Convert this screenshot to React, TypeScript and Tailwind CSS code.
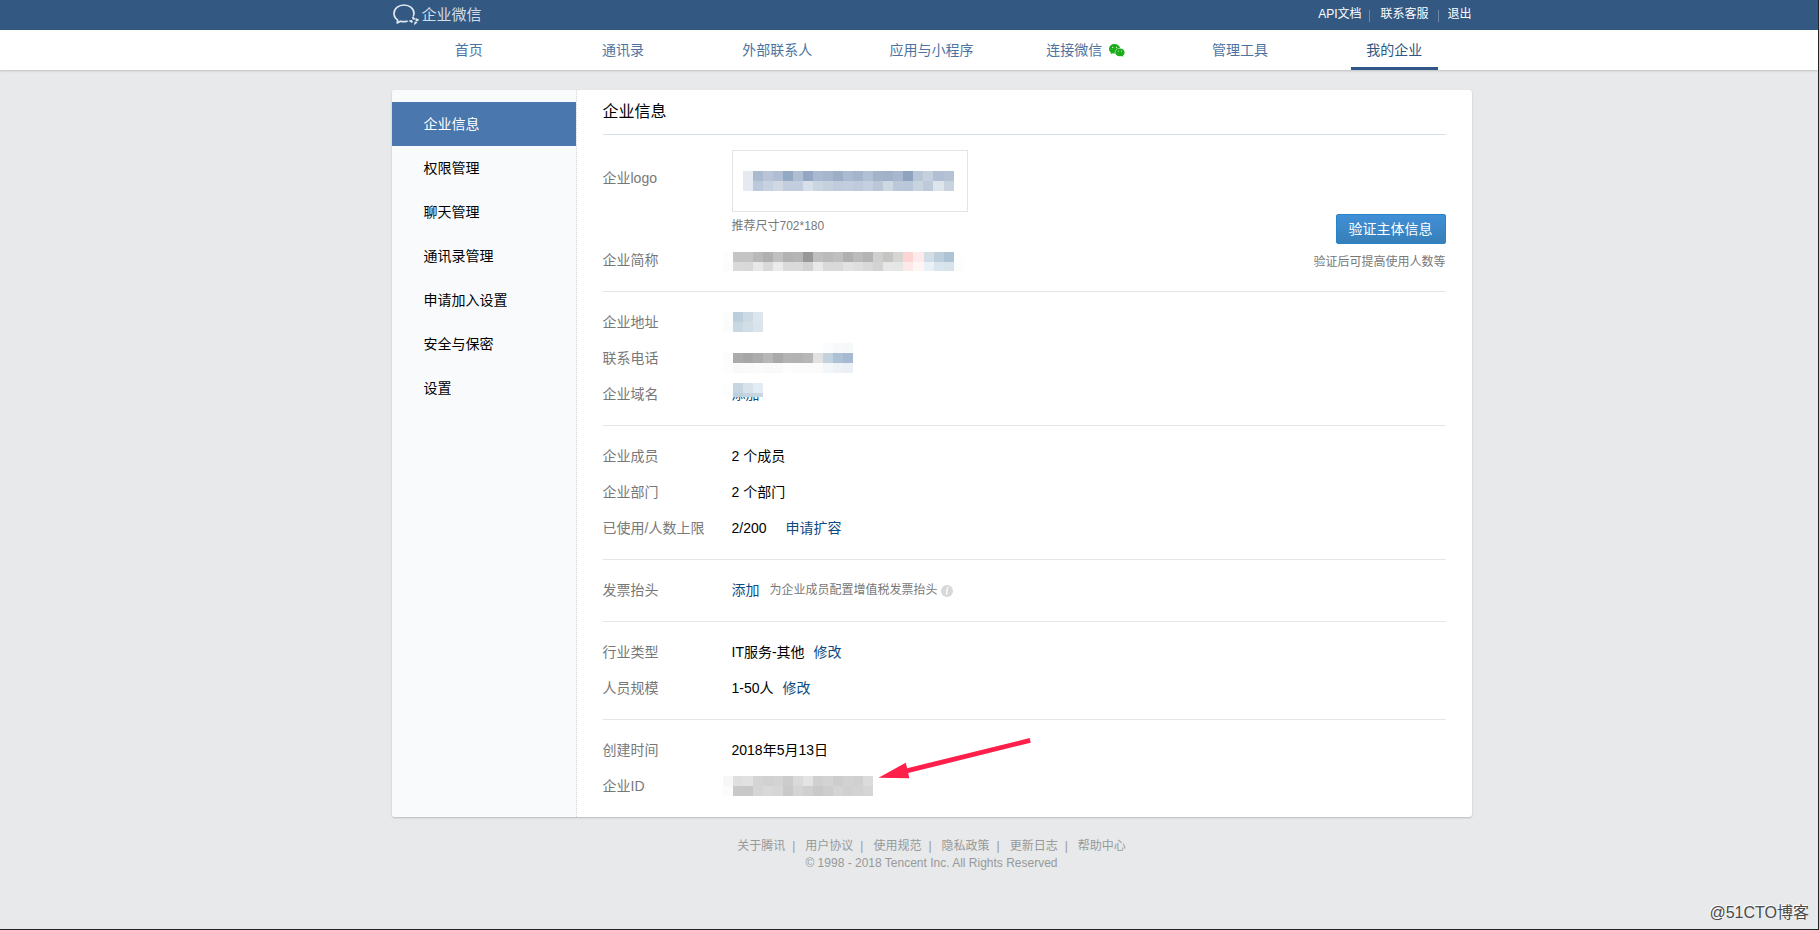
import type { ReactNode } from 'react';

const NAV = ['首页', '通讯录', '外部联系人', '应用与小程序', '连接微信', '管理工具', '我的企业'];
const SIDE = ['企业信息', '权限管理', '聊天管理', '通讯录管理', '申请加入设置', '安全与保密', '设置'];
const FOOT = ['关于腾讯', '用户协议', '使用规范', '隐私政策', '更新日志', '帮助中心'];

const LOGO_TILES = [
  '#e6eaee #aabad0 #b9c5d7 #afbed2 #93a8c2 #afbed1 #93a7c2 #a9b9cf #a6b6cd #9cadc6 #aabad0 #a4b4cb #b2c0d6 #a2b3ca #a1b2c8 #a8b7cf #8fa2c0 #b9c6d8 #c4d0de #b0bfd3 #b4c2d4',
  '#e5e9f1 #bcc9da #c6d2df #d0d8e4 #c2cddd #c2cedd #d7dfea #cad5e2 #c5d0df #c0ccdc #c2cddd #bfcbdc #c4cfdf #b9c7d9 #cdd8e3 #bac8d9 #b9c7d9 #c8d4df #bdcada #dde4eb #c9d3e0',
];
const NAME_TILES = [
  '#fdfdfd #c4c4c4 #c4c4c4 #b9b9b9 #b0b0b0 #c0c0c0 #b2b2b2 #b5b5b5 #989898 #bfbfbf #bababa #bfbfbf #b0b0b0 #bbbbbb #b4b4b4 #cfd0ce #c5c5c4 #d6d5d3 #fcd4d3 #fdebeb #d2dde6 #bccddc #adc3d6 #fdfefe',
  '#fcfcfc #dadada #d8d8d8 #e8e8e8 #d9d9d9 #ebebeb #dadada #dadada #d2d2d2 #e9e9e9 #d9d9d9 #d9d9d9 #e2e2e2 #dfdfdf #d9d9d9 #d3d3d3 #e7e7e7 #e7e6e6 #fee9e9 #fff5f5 #e9f0f6 #d9e4ec #d7e2eb #fbfdfd',
];
const ADDRESS_TILES = ['#fbfdfd #bccddb #cddae3 #dde5ed', '#fafcfc #c9d7e2 #d1dee6 #dbe3ed'];
const PHONE_TILES = [
  '#fff #fff #fff #fff #fff #fff #fff #fff #fff #fff #fafcfd #f7f9fb #f6f9fa',
  '#fcfcfc #ababab #a6a6a6 #acacac #b7b7b7 #a9a9a9 #b3b3b3 #b2b2b2 #b7b7b7 #e1e1e1 #c2d1de #adc1d4 #a5bad0',
  '#fdfdfd #f9f9f9 #fafafa #fbfbfb #f9f9f9 #fafafa #fdfdfd #fcfcfc #fbfbfb #fbfbfb #f3f7fa #eef2f6 #ebf0f6',
];
const DOMAIN_TILES = ['#fcfdfd #c7d5e1 #d8e2ea #e3ebf3', '#fcfdfd #bdcedc #c6d4df #c9d7e2'];
const ID_TILES = [
  '#f7f7f7 #dfdfdf #e1e1e1 #d4d4d4 #d1d1d1 #d3d3d3 #cccccc #dadada #e3e3e3 #d0d0d0 #d3d3d3 #cdcdcd #d2d2d2 #d0d0d0 #dbdbdb',
  '#fbfbfb #c9c9c9 #c8c8c8 #d5d5d5 #d9d9d9 #d6d6d6 #c9c9c9 #d4d4d4 #cfcfcf #c9c9c9 #cdcdcd #d4d4d4 #d0d0d0 #d2d2d2 #d5d5d5',
];

const edge = (n: number) => Math.floor(n * 10.05);

function Mosaic({ rows, className, height }: { rows: string[]; className: string; height?: number }) {
  const cells = rows.map((r) => r.split(' '));
  return (
    <svg
      className={className}
      width={edge(cells[0].length)}
      height={height ?? rows.length * 10}
      aria-hidden="true"
      shapeRendering="crispEdges"
    >
      {cells.map((row, y) =>
        row.map((c, x) => (
          <rect key={`${x}-${y}`} x={edge(x)} y={y * 10} width={edge(x + 1) - edge(x)} height="10" fill={c} />
        ))
      )}
    </svg>
  );
}

function Row({ label, children }: { label: string; children: ReactNode }) {
  return (
    <div className="flex h-9 items-center">
      <dt className="w-[129px] shrink-0 text-[#787878]">{label}</dt>
      <dd className="relative flex h-full items-center">{children}</dd>
    </div>
  );
}

function Section({ children }: { children: ReactNode }) {
  return <dl className="border-t border-[#e4e6e9] pt-3 pb-[13px]">{children}</dl>;
}

function Link({ children }: { children: ReactNode }) {
  return <a href="#" className="text-[#0d4a82]">{children}</a>;
}

function BrandMark() {
  return (
    <svg width="28" height="22" viewBox="0 0 28 22" fill="none" stroke="#dfe7ef" aria-hidden="true">
      <path
        d="M21.500 11.300C21.900 10.700 22 10 22 9.300C22 4.600 17.500 1 12 1S2 4.700 2 9.300C2 12.200 3.400 14.600 5.700 16.100L5.200 18.900L8.400 17.200C10.700 17.900 13.200 17.800 15 17.200"
        strokeWidth="1.700"
        strokeLinecap="round"
        strokeLinejoin="round"
      />
      <g fill="#dfe7ef" stroke="none">
        <path d="M21.300 11.800C21.800 13.500 22.400 14.200 23.800 14.700C22.800 16 21.100 15.900 20.400 14.900C19.800 13.900 20.200 12.600 21.300 11.800Z" />
        <path d="M27.300 15.400C26.400 17.100 25 17.500 24 16.900C23.100 16.200 23.200 14.800 24.300 14C24.900 14.900 25.700 15.400 27.300 15.400Z" />
        <path d="M22.800 21.400C22 19.900 21.900 18.700 22.900 17.800C23.900 17.200 25.100 17.700 25.300 19C24 19.300 23.300 20 22.800 21.400Z" />
        <path d="M16.500 17.400C17.800 15.900 19.300 15.600 20.300 16.400C21.100 17.200 20.900 18.400 19.800 19.100C19.100 18 18.200 17.400 16.500 17.400Z" />
      </g>
    </svg>
  );
}

function WeChatIcon() {
  return (
    <svg width="16" height="13" viewBox="0 0 16 13" aria-hidden="true">
      <path fill="#1aad19" d="M5.600 0C2.500 0 0 2.100 0 4.900c0 1.500.8 2.800 2 3.700L1.500 10.300l2-1c.8.3 1.500.4 2.300.4C5.500 6.400 8 4.200 11.100 4.100 10.700 1.700 8.400 0 5.600 0z" />
      <path fill="#1aad19" d="M10.900 4.500c2.600 0 4.700 1.700 4.700 3.900 0 1.200-.7 2.300-1.700 3l.4 1.400-1.600-.8c-.6.2-1.200.3-1.800.3-2.600 0-4.700-1.700-4.700-3.900s2.100-3.900 4.700-3.900z" />
      <circle cx="3.700" cy="3.500" r=".7" fill="#c9ecc9" />
      <circle cx="7.500" cy="3.500" r=".7" fill="#c9ecc9" />
      <circle cx="9.400" cy="7.200" r=".6" fill="#a5dfa5" />
      <circle cx="12.500" cy="7.200" r=".6" fill="#a5dfa5" />
    </svg>
  );
}

export default function App() {
  return (
    <div className="relative flex min-h-screen flex-col border-r border-b border-[#222428] bg-[#e7e9eb] font-['Liberation_Sans','Noto_Sans_CJK_SC',sans-serif] text-sm text-black">
      <header className="bg-[#335983] pl-[45px]">
        <div className="mx-auto flex h-[30px] max-w-[1080px] items-center justify-between">
          <a href="#" className="flex items-center gap-0.5 text-[15px] text-[#d3dde8]">
            <BrandMark />
            企业微信
          </a>
          <div className="flex items-center pb-0.5 text-xs text-white">
            <a href="#">API文档</a>
            <span className="mx-2 h-3 w-px translate-y-0.5 bg-[#6e89a8]" />
            <a href="#" className="ml-0.5">联系客服</a>
            <span className="mr-2 ml-2.5 h-3 w-px translate-y-0.5 bg-[#6e89a8]" />
            <a href="#">退出</a>
          </div>
        </div>
      </header>

      <nav className="bg-white pl-[45px] shadow-[0_1px_2px_rgba(0,0,0,0.18)]">
        <ul className="mx-auto flex h-10 max-w-[1080px]">
          {NAV.map((n, i) => (
            <li key={n} className="flex flex-1 justify-center">
              <a
                href="#"
                className={
                  i === 6
                    ? 'flex w-[87px] items-center justify-center border-b-[3px] border-[#2e5785] pt-[3px] text-[#2e5785]'
                    : 'flex items-center gap-[7px] text-[#4d74a1]'
                }
              >
                {n}
                {i === 4 && <WeChatIcon />}
              </a>
            </li>
          ))}
        </ul>
      </nav>

      <div className="pt-5 pl-[45px]">
        <div className="mx-auto flex max-w-[1080px] overflow-hidden rounded-[3px] bg-white shadow-[0_1px_2px_rgba(0,0,0,0.2)]">
          <aside className="w-[185px] shrink-0 border-r border-dotted border-[#d3d8de] bg-[#f9fafc] pt-3">
            {SIDE.map((s, i) => (
              <a
                key={s}
                href="#"
                className={
                  i === 0
                    ? 'flex h-11 items-center bg-[#4a77ad] pl-8 text-white'
                    : 'flex h-11 items-center pl-8'
                }
              >
                {s}
              </a>
            ))}
          </aside>

          <main className="min-w-0 flex-1 px-[26px]">
            <h1 className="h-11 pt-0.5 text-base leading-10">企业信息</h1>
            <div className="flex justify-between border-t border-[#d9e0e7] pt-[15px] pb-[13px]">
              <dl>
                <div className="flex">
                  <dt className="w-[129px] pt-[18px] leading-5 text-[#787878]">企业logo</dt>
                  <dd>
                    <div className="flex h-[62px] w-[236px] items-center border border-[#e2e4e8] pl-2.5">
                      <Mosaic rows={LOGO_TILES} className="block" />
                    </div>
                    <p className="mt-1 mb-1.5 text-xs leading-5 text-[#787878]">推荐尺寸702*180</p>
                  </dd>
                </div>
                <Row label="企业简称">
                  <Mosaic rows={NAME_TILES} height={19} className="mt-[3px] -ml-[9px] block" />
                </Row>
              </dl>
              <div className="flex flex-col items-end pt-16">
                <button
                  type="button"
                  className="h-[30px] w-[110px] rounded-xs border border-[#2485c9] bg-linear-to-b from-[#418fd7] to-[#367fb8] text-white"
                >
                  验证主体信息
                </button>
                <p className="mt-2 text-xs leading-5 text-[#787878]">验证后可提高使用人数等</p>
              </div>
            </div>

            <Section>
              <Row label="企业地址">
                <Mosaic rows={ADDRESS_TILES} className="-ml-[9px] block" />
              </Row>
              <Row label="联系电话">
                <Mosaic rows={PHONE_TILES} className="-ml-[9px] block" />
              </Row>
              <Row label="企业域名">
                <Link>添加</Link>
                <Mosaic rows={DOMAIN_TILES} height={14} className="absolute top-[7px] -left-[9px]" />
              </Row>
            </Section>

            <Section>
              <Row label="企业成员">2 个成员</Row>
              <Row label="企业部门">2 个部门</Row>
              <Row label="已使用/人数上限">
                <span className="mr-[19px]">2/200</span>
                <Link>申请扩容</Link>
              </Row>
            </Section>

            <Section>
              <Row label="发票抬头">
                <Link>添加</Link>
                <span className="ml-2.5 text-xs text-[#787878]">为企业成员配置增值税发票抬头</span>
                <svg className="mt-0.5 ml-[3px]" width="12" height="12" viewBox="0 0 12 12" aria-hidden="true">
                  <circle cx="6" cy="6" r="6" fill="#d8d8d8" />
                  <circle cx="6.700" cy="3" r=".9" fill="#fff" />
                  <path d="M5 5.200h1.300L5.500 9h1.200" fill="none" stroke="#fff" strokeWidth="1.200" />
                </svg>
              </Row>
            </Section>

            <Section>
              <Row label="行业类型">
                <span className="mr-[9px]">IT服务-其他</span>
                <Link>修改</Link>
              </Row>
              <Row label="人员规模">
                <span className="mr-[9px]">1-50人</span>
                <Link>修改</Link>
              </Row>
            </Section>

            <Section>
              <Row label="创建时间">2018年5月13日</Row>
              <Row label="企业ID">
                <Mosaic rows={ID_TILES} className="-ml-[9px] block" />
                <svg className="absolute -top-8 left-[146px]" width="154" height="44" viewBox="0 0 154 44" aria-hidden="true">
                  <path d="M.5 41.700L27.700 26.700L29.200 32.200L151.700 2L152.700 6.700L30.200 37L31.300 42.300Z" fill="#ff1f4b" />
                </svg>
              </Row>
            </Section>
          </main>
        </div>
      </div>

      <footer className="pt-5 pl-[45px] text-xs leading-[18px] text-[#999]">
        <ul className="flex justify-center">
          {FOOT.map((f, i) => (
            <li key={f} className="flex">
              {i > 0 && <span className="mr-2.5 ml-[7px]">|</span>}
              <a href="#">{f}</a>
            </li>
          ))}
        </ul>
        <p className="-mt-px text-center">© 1998 - 2018 Tencent Inc. All Rights Reserved</p>
      </footer>

      <div className="absolute right-[9px] bottom-1.5 text-base leading-5 text-[#4a4a4a] [text-shadow:-1px_-1px_0_#fff]">
        @51CTO博客
      </div>
    </div>
  );
}
